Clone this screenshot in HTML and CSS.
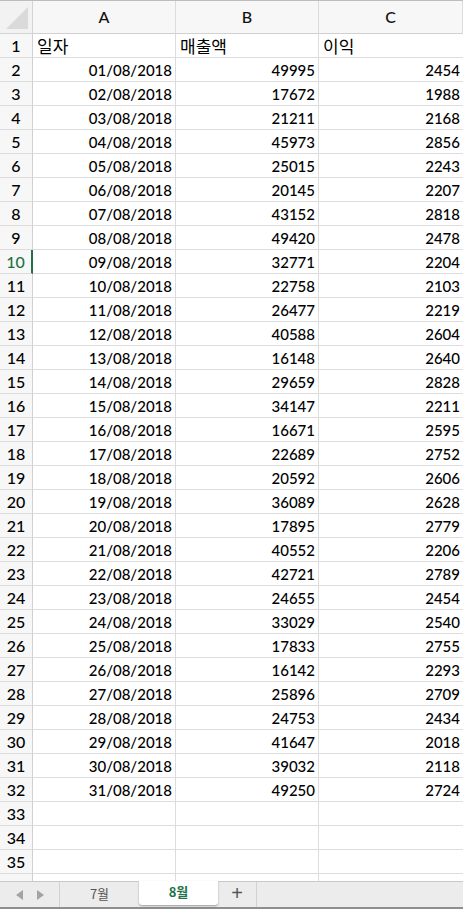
FILE: index.html
```html
<!DOCTYPE html>
<html lang="ko">
<head>
    <meta charset="UTF-8">
    <meta name="viewport" content="width=device-width, initial-scale=1.0">
    <title>매출 8월</title>
    <link rel="stylesheet" href="styles.css">
</head>
<body>
    <div class="sheet">
        <!-- Griglia -->
        <div class="grid">
            <div class="corner"><span class="corner-tri"></span></div>
            <div class="col-head">A</div>
            <div class="col-head">B</div>
            <div class="col-head last">C</div>

            <div class="row-head">1</div>
            <div class="cell text">일자</div>
            <div class="cell text">매출액</div>
            <div class="cell text last">이익</div>

            <div class="row-head">2</div><div class="cell">01/08/2018</div><div class="cell">49995</div><div class="cell last">2454</div>
            <div class="row-head">3</div><div class="cell">02/08/2018</div><div class="cell">17672</div><div class="cell last">1988</div>
            <div class="row-head">4</div><div class="cell">03/08/2018</div><div class="cell">21211</div><div class="cell last">2168</div>
            <div class="row-head">5</div><div class="cell">04/08/2018</div><div class="cell">45973</div><div class="cell last">2856</div>
            <div class="row-head">6</div><div class="cell">05/08/2018</div><div class="cell">25015</div><div class="cell last">2243</div>
            <div class="row-head">7</div><div class="cell">06/08/2018</div><div class="cell">20145</div><div class="cell last">2207</div>
            <div class="row-head">8</div><div class="cell">07/08/2018</div><div class="cell">43152</div><div class="cell last">2818</div>
            <div class="row-head">9</div><div class="cell">08/08/2018</div><div class="cell">49420</div><div class="cell last">2478</div>
            <div class="row-head active">10</div><div class="cell">09/08/2018</div><div class="cell">32771</div><div class="cell last">2204</div>
            <div class="row-head">11</div><div class="cell">10/08/2018</div><div class="cell">22758</div><div class="cell last">2103</div>
            <div class="row-head">12</div><div class="cell">11/08/2018</div><div class="cell">26477</div><div class="cell last">2219</div>
            <div class="row-head">13</div><div class="cell">12/08/2018</div><div class="cell">40588</div><div class="cell last">2604</div>
            <div class="row-head">14</div><div class="cell">13/08/2018</div><div class="cell">16148</div><div class="cell last">2640</div>
            <div class="row-head">15</div><div class="cell">14/08/2018</div><div class="cell">29659</div><div class="cell last">2828</div>
            <div class="row-head">16</div><div class="cell">15/08/2018</div><div class="cell">34147</div><div class="cell last">2211</div>
            <div class="row-head">17</div><div class="cell">16/08/2018</div><div class="cell">16671</div><div class="cell last">2595</div>
            <div class="row-head">18</div><div class="cell">17/08/2018</div><div class="cell">22689</div><div class="cell last">2752</div>
            <div class="row-head">19</div><div class="cell">18/08/2018</div><div class="cell">20592</div><div class="cell last">2606</div>
            <div class="row-head">20</div><div class="cell">19/08/2018</div><div class="cell">36089</div><div class="cell last">2628</div>
            <div class="row-head">21</div><div class="cell">20/08/2018</div><div class="cell">17895</div><div class="cell last">2779</div>
            <div class="row-head">22</div><div class="cell">21/08/2018</div><div class="cell">40552</div><div class="cell last">2206</div>
            <div class="row-head">23</div><div class="cell">22/08/2018</div><div class="cell">42721</div><div class="cell last">2789</div>
            <div class="row-head">24</div><div class="cell">23/08/2018</div><div class="cell">24655</div><div class="cell last">2454</div>
            <div class="row-head">25</div><div class="cell">24/08/2018</div><div class="cell">33029</div><div class="cell last">2540</div>
            <div class="row-head">26</div><div class="cell">25/08/2018</div><div class="cell">17833</div><div class="cell last">2755</div>
            <div class="row-head">27</div><div class="cell">26/08/2018</div><div class="cell">16142</div><div class="cell last">2293</div>
            <div class="row-head">28</div><div class="cell">27/08/2018</div><div class="cell">25896</div><div class="cell last">2709</div>
            <div class="row-head">29</div><div class="cell">28/08/2018</div><div class="cell">24753</div><div class="cell last">2434</div>
            <div class="row-head">30</div><div class="cell">29/08/2018</div><div class="cell">41647</div><div class="cell last">2018</div>
            <div class="row-head">31</div><div class="cell">30/08/2018</div><div class="cell">39032</div><div class="cell last">2118</div>
            <div class="row-head">32</div><div class="cell">31/08/2018</div><div class="cell">49250</div><div class="cell last">2724</div>
            <div class="row-head">33</div><div class="cell"></div><div class="cell"></div><div class="cell last"></div>
            <div class="row-head">34</div><div class="cell"></div><div class="cell"></div><div class="cell last"></div>
            <div class="row-head">35</div><div class="cell"></div><div class="cell"></div><div class="cell last"></div>
            <div class="row-head">36</div><div class="cell"></div><div class="cell"></div><div class="cell last"></div>
        </div>

        <!-- Schede fogli -->
        <div class="tabs">
            <div class="tab-nav">
                <span class="arrow arrow-left"></span>
                <span class="arrow arrow-right"></span>
            </div>
            <div class="tab">7월</div>
            <div class="tab tab-active">8월</div>
            <div class="tab-add">+</div>
            <div class="tab-rest"></div>
        </div>
    </div>
</body>
</html>
```

FILE: styles.css
```css
/* Stile generale */
body {
    margin: 0;
    background-color: #ffffff;
    font-family: Lato, 'Liberation Sans', 'Noto Sans CJK KR', sans-serif;
    color: #000000;
}

.sheet {
    width: 463px;
    height: 909px;
    display: flex;
    flex-direction: column;
    overflow: hidden;
}

/* Griglia */
.grid {
    height: 881px;
    overflow: hidden;
    display: grid;
    grid-template-columns: 33px 143px 143px 1fr;
    grid-template-rows: 33px;
    grid-auto-rows: 24px;
    border-top: 1px solid #bdbdbd;
    box-sizing: border-box;
}

.corner {
    position: relative;
    background-color: #f2f2f2;
    border-right: 1px solid #d4d4d4;
    border-bottom: 1px solid #d4d4d4;
}

.corner-tri {
    position: absolute;
    right: 4px;
    bottom: 4px;
    width: 0;
    height: 0;
    border-left: 22px solid transparent;
    border-bottom: 22px solid #dadada;
}

.col-head {
    background-color: #f7f7f7;
    border-right: 1px solid #dcdcdc;
    border-bottom: 1px solid #d0d0d0;
    display: flex;
    align-items: center;
    justify-content: center;
    font-size: 16px;
    font-weight: 500;
    color: #111111;
    padding-bottom: 1px;
}

.row-head {
    background-color: #f7f7f7;
    border-right: 1px solid #d0d0d0;
    border-bottom: 1px solid #dcdcdc;
    display: flex;
    align-items: flex-end;
    justify-content: center;
    font-size: 16px;
    font-weight: 500;
    line-height: 22px;
    color: #000000;
}

.row-head.active {
    color: #217346;
    border-right: 2px solid #217346;
}

.cell {
    border-right: 1px solid #dcdcdc;
    border-bottom: 1px solid #dcdcdc;
    display: flex;
    align-items: flex-end;
    justify-content: flex-end;
    padding: 0 3px 0 4px;
    font-size: 15px;
    font-weight: 500;
    line-height: 22px;
    white-space: nowrap;
    overflow: hidden;
}

.cell.last {
    border-right: none;
}

.cell.text {
    justify-content: flex-start;
    font-family: 'Noto Sans CJK KR', sans-serif;
    font-size: 17px;
    font-weight: 400;
    line-height: 23px;
}

/* Schede fogli */
.tabs {
    flex: 1;
    display: flex;
    background-color: #ececec;
    border-top: 1px solid #c9c9c9;
    border-bottom: 2px solid #8e8e8e;
    font-family: 'Noto Sans CJK KR', sans-serif;
    font-size: 13px;
}

.tab-nav {
    width: 60px;
    display: flex;
    align-items: center;
    justify-content: center;
    gap: 14px;
    border-right: 1px solid #d2d2d2;
    box-sizing: border-box;
}

.arrow {
    width: 0;
    height: 0;
    border-top: 5px solid transparent;
    border-bottom: 5px solid transparent;
}

.arrow-left {
    border-right: 7px solid #a3a3a3;
}

.arrow-right {
    border-left: 7px solid #a3a3a3;
}

.tab {
    width: 79px;
    display: flex;
    align-items: center;
    justify-content: center;
    color: #555555;
    padding-bottom: 3px;
}

.tab-active {
    background-color: #ffffff;
    color: #217346;
    font-weight: bold;
    border-radius: 0 0 3px 3px;
    box-shadow: 0 1px 2px rgba(0, 0, 0, 0.35);
    margin-bottom: 2px;
    margin-top: -1px;
}

.tab-add {
    width: 38px;
    display: flex;
    align-items: center;
    justify-content: center;
    font-family: 'Liberation Sans', sans-serif;
    font-size: 20px;
    color: #555555;
    border-right: 1px solid #d2d2d2;
    padding-bottom: 2px;
}

.tab-rest {
    flex: 1;
}
```
